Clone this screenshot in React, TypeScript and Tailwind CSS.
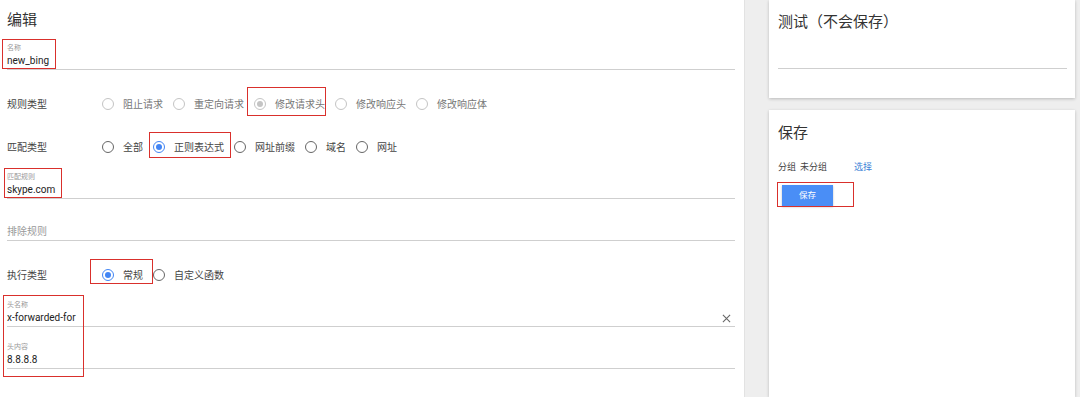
type Tone = "muted" | "normal";

function Mark({
  box,
  className = "",
  children,
}: {
  box: string;
  className?: string;
  children: React.ReactNode;
}) {
  return (
    <div className={`relative ${className}`}>
      {children}
      <span
        className={`pointer-events-none absolute border-[1.5px] border-[#d9302c] ${box}`}
      />
    </div>
  );
}

function Radio({ checked, tone }: { checked?: boolean; tone: Tone }) {
  if (checked && tone === "normal") {
    return (
      <span className="flex h-[12px] w-[12px] shrink-0 items-center justify-center rounded-full border-[1.5px] border-[#4285f4]">
        <span className="h-[6px] w-[6px] rounded-full bg-[#4285f4]" />
      </span>
    );
  }
  if (checked) {
    return (
      <span className="flex h-[12px] w-[12px] shrink-0 items-center justify-center rounded-full border-[1.5px] border-[#c4c4c4]">
        <span className="h-[6px] w-[6px] rounded-full bg-[#c4c4c4]" />
      </span>
    );
  }
  return (
    <span
      className={`h-[12px] w-[12px] shrink-0 rounded-full border-[1.5px] ${
        tone === "muted" ? "border-[#c4c4c4]" : "border-[#666]"
      }`}
    />
  );
}

function Option({
  text,
  checked,
  tone,
}: {
  text: string;
  checked?: boolean;
  tone: Tone;
}) {
  return (
    <div className="mr-[10px] flex h-[20px] items-center">
      <Radio checked={checked} tone={tone} />
      <span
        className={`ml-[9px] whitespace-nowrap ${
          tone === "muted" ? "text-[#777]" : "text-[#444]"
        }`}
      >
        {text}
      </span>
    </div>
  );
}

function Row({ label, children, className }: { label: string; children: React.ReactNode; className: string }) {
  return (
    <div className={`flex h-[20px] items-center text-[10px] ${className}`}>
      <span className="w-[95px] shrink-0 text-[#444]">{label}</span>
      {children}
    </div>
  );
}

function Field({
  label,
  value,
  className,
  box,
  clear,
}: {
  label?: string;
  value: string;
  className: string;
  box?: string;
  clear?: boolean;
}) {
  const body = (
    <div>
      <div className="h-[9px] text-[7px] leading-[9px] text-[#999]">{label}</div>
      <div
        className={`flex h-[16px] items-center justify-between text-[10px] leading-[16px] ${
          label ? "text-[#222]" : "text-[#999]"
        }`}
      >
        <span>{value}</span>
      </div>
    </div>
  );
  return (
    <div className={`relative border-b border-[#cfcfcf] ${className}`}>
      {box ? <Mark box={box}>{body}</Mark> : body}
      {clear && (
        <svg
          viewBox="0 0 10 10"
          className="absolute right-[4px] top-[13px] h-[9px] w-[9px]"
          stroke="#666"
          strokeWidth="1.2"
        >
          <path d="M1 1l8 8M9 1l-8 8" />
        </svg>
      )}
    </div>
  );
}

export default function App() {
  return (
    <div
      className="flex h-[397px] w-[1080px] overflow-hidden bg-[#eeeeee]"
      style={{ fontFamily: 'Roboto, "Noto Sans CJK SC", sans-serif' }}
    >
      <div className="w-[745px] shrink-0 border-r border-[#e2e2e2] bg-white pl-[7px] pr-[9px]">
        <h1 className="pt-[10px] text-[15px] leading-[20px] text-[#333]">编辑</h1>

        <Field
          label="名称"
          value="new_bing"
          className="mt-[14px]"
          box="-left-[5px] -top-[5px] h-[30px] w-[54px]"
        />

        <Row label="规则类型" className="mt-[24px]">
          <Option text="阻止请求" tone="muted" />
          <Option text="重定向请求" tone="muted" />
          <Mark box="-left-[7px] -top-[7px] h-[29px] w-[79px]">
            <Option text="修改请求头" tone="muted" checked />
          </Mark>
          <Option text="修改响应头" tone="muted" />
          <Option text="修改响应体" tone="muted" />
        </Row>

        <Row label="匹配类型" className="mt-[23px]">
          <Option text="全部" tone="normal" />
          <Mark box="-left-[4px] -top-[5px] h-[26px] w-[82px]">
            <Option text="正则表达式" tone="normal" checked />
          </Mark>
          <Option text="网址前缀" tone="normal" />
          <Option text="域名" tone="normal" />
          <Option text="网址" tone="normal" />
        </Row>

        <Field
          label="匹配规则"
          value="skype.com"
          className="mt-[16px]"
          box="-left-[3px] -top-[5px] h-[30px] w-[58px]"
        />

        <Field value="排除规则" className="mt-[16px]" />

        <Row label="执行类型" className="mt-[24px]">
          <Mark box="-left-[12px] -top-[6px] h-[25px] w-[63px]">
            <Option text="常规" tone="normal" checked />
          </Mark>
          <Option text="自定义函数" tone="normal" />
        </Row>

        <Mark box="-left-[4px] -top-[6px] h-[82px] w-[81px]" className="mt-[16px]">
          <Field label="头名称" value="x-forwarded-for" className="" clear />
          <Field label="头内容" value="8.8.8.8" className="mt-[16px]" />
        </Mark>
      </div>

      <div className="ml-[24px] mr-[5px] flex flex-1 flex-col gap-[12px]">
        <div className="h-[98px] bg-white px-[9px] pt-[12px] shadow-[0_1px_3px_rgba(0,0,0,0.22)]">
          <h2 className="text-[15px] leading-[20px] text-[#333]">测试（不会保存）</h2>
          <div className="mr-[-1px] h-[37px] border-b border-[#cfcfcf]" />
        </div>
        <div className="flex-1 bg-white px-[9px] pt-[13px] shadow-[0_1px_3px_rgba(0,0,0,0.22)]">
          <h2 className="text-[15px] leading-[20px] text-[#333]">保存</h2>
          <div className="mt-[19px] flex h-[12px] items-center text-[9px] text-[#444]">
            <span>分组</span>
            <span className="ml-[4px]">未分组</span>
            <span className="ml-[27px] text-[#3b82d6]">选择</span>
          </div>
          <div className="ml-[4px] mt-[11px] w-[51px]">
            <Mark box="-left-[5px] -top-[3px] h-[25px] w-[77px]">
              <button className="flex h-[21px] w-[51px] items-center justify-center bg-[#4a8ef6] text-[8.5px] text-white shadow-[0_1px_2px_rgba(0,0,0,0.25)]">
                保存
              </button>
            </Mark>
          </div>
        </div>
      </div>
    </div>
  );
}
